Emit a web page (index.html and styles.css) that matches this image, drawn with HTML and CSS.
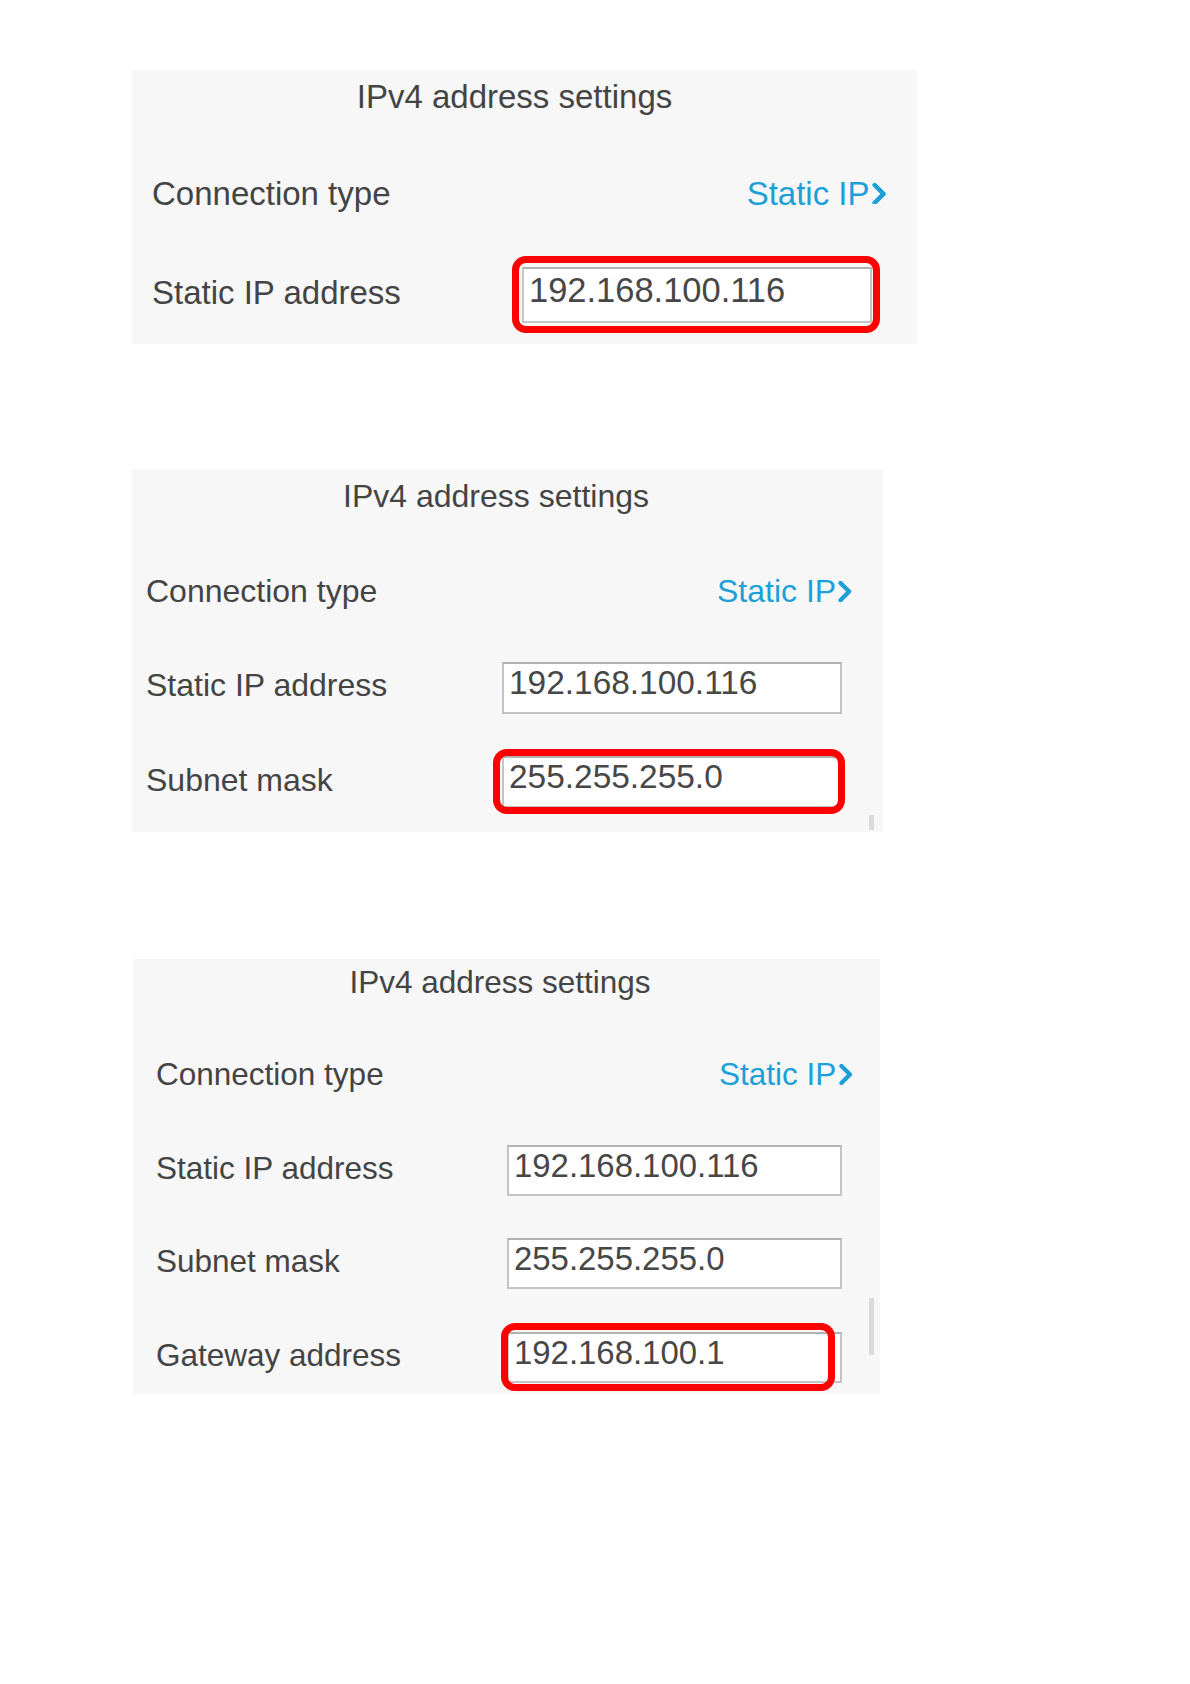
FILE: index.html
```html
<!DOCTYPE html>
<html lang="en">
<head>
    <meta charset="UTF-8">
    <meta name="viewport" content="width=device-width, initial-scale=1.0">
    <title>IPv4 address settings</title>
    <link rel="stylesheet" href="styles.css">
</head>
<body>
    <main class="page">
        <!-- step 1: static ip -->
        <section class="panel panel-one">
            <h2 class="panel-title">IPv4 address settings</h2>
            <div class="row">
                <span class="row-label">Connection type</span>
                <a class="row-link" href="#">Static IP<svg class="chevron" viewBox="0 0 16 22"><polyline points="3,2 12,11 3,20"/></svg></a>
            </div>
            <div class="row">
                <span class="row-label">Static IP address</span>
                <div class="field">192.168.100.116<span class="mark mark-one"></span></div>
            </div>
        </section>

        <!-- step 2: subnet mask -->
        <section class="panel panel-two">
            <h2 class="panel-title">IPv4 address settings</h2>
            <div class="row">
                <span class="row-label">Connection type</span>
                <a class="row-link" href="#">Static IP<svg class="chevron" viewBox="0 0 16 22"><polyline points="3,2 12,11 3,20"/></svg></a>
            </div>
            <div class="row">
                <span class="row-label">Static IP address</span>
                <div class="field">192.168.100.116</div>
            </div>
            <div class="row">
                <span class="row-label">Subnet mask</span>
                <div class="field">255.255.255.0<span class="mark mark-two"></span></div>
            </div>
            <span class="scroll scroll-two"></span>
        </section>

        <!-- step 3: gateway -->
        <section class="panel panel-three">
            <h2 class="panel-title">IPv4 address settings</h2>
            <div class="row">
                <span class="row-label">Connection type</span>
                <a class="row-link" href="#">Static IP<svg class="chevron" viewBox="0 0 16 22"><polyline points="3,2 12,11 3,20"/></svg></a>
            </div>
            <div class="row">
                <span class="row-label">Static IP address</span>
                <div class="field">192.168.100.116</div>
            </div>
            <div class="row">
                <span class="row-label">Subnet mask</span>
                <div class="field">255.255.255.0</div>
            </div>
            <div class="row">
                <span class="row-label">Gateway address</span>
                <div class="field">192.168.100.1<span class="mark mark-three"></span></div>
            </div>
            <span class="scroll scroll-three"></span>
        </section>
    </main>
</body>
</html>
```

FILE: styles.css
```css
body {
    margin: 0;
    background: #fff;
    font-family: "Liberation Sans", Arial, sans-serif;
    color: #444;
}

.page {
    padding: 70px 0 0 132px;
}

.panel {
    position: relative;
    box-sizing: border-box;
    width: var(--w);
    height: var(--h);
    background: #f7f7f7;
    font-size: var(--fs);
}

.panel-one {
    --w: 785px;
    --h: 274px;
    --fs: 33px;
    --title-h: 54px;
    --title-gap: 20px;
    --title-shift: 20px;
    --row: 99px;
    --pad-l: 20px;
    --link-r: 29px;
    --field-r: 45px;
    --field-w: 350px;
    --field-h: 56px;
    --field-pt: 4px;
}

.panel-two {
    margin-top: 125px;
    --w: 751px;
    --h: 363px;
    --fs: 32px;
    --title-h: 54px;
    --title-gap: 21px;
    --title-shift: 23px;
    --row: 94.5px;
    --pad-l: 14px;
    --link-r: 29px;
    --field-r: 41px;
    --field-w: 340px;
    --field-h: 52px;
    --field-pt: 2px;
}

.panel-three {
    margin-top: 127px;
    margin-left: 1px;
    --w: 747px;
    --h: 435px;
    --fs: 31.5px;
    --title-h: 46px;
    --title-gap: 23px;
    --title-shift: 13px;
    --row: 93.5px;
    --pad-l: 23px;
    --link-r: 26px;
    --field-r: 38px;
    --field-w: 335px;
    --field-h: 51px;
    --field-pt: 3px;
}

.panel-title {
    margin: 0 0 var(--title-gap);
    padding-right: var(--title-shift);
    font-size: 1em;
    font-weight: 400;
    line-height: var(--title-h);
    text-align: center;
    color: #444;
}

.row {
    display: flex;
    align-items: center;
    height: var(--row);
    padding-left: var(--pad-l);
}

.row-label {
    color: #444;
}

.row-link {
    display: flex;
    align-items: center;
    margin-left: auto;
    margin-right: var(--link-r);
    color: #1d9fd8;
    text-decoration: none;
}

.chevron {
    width: 0.52em;
    height: 0.66em;
    margin-left: 0.04em;
    fill: none;
    stroke: currentColor;
    stroke-width: 4.5;
    stroke-linecap: round;
    stroke-linejoin: round;
}

.field {
    position: relative;
    box-sizing: border-box;
    width: var(--field-w);
    height: var(--field-h);
    margin: 4px var(--field-r) 0 auto;
    padding: var(--field-pt) 0 0 5px;
    border: 2px solid #c4c4c4;
    border-top-color: #b2b2b2;
    background: #fff;
    font-size: 1.045em;
    line-height: 1;
    color: #474747;
}

/* red highlight drawn over the field */
.mark {
    position: absolute;
    border: 7px solid #f00;
    border-radius: 14px;
}

.mark-one {
    top: -13px;
    left: -12px;
    right: -10px;
    bottom: -12px;
}

.mark-two {
    top: -9px;
    left: -11px;
    right: -5px;
    bottom: -8px;
}

.mark-three {
    top: -11px;
    left: -8px;
    right: 5px;
    bottom: -10px;
}

.scroll {
    position: absolute;
    width: 5px;
    background: #dadada;
}

.scroll-two {
    top: 346px;
    right: 9px;
    height: 15px;
}

.scroll-three {
    top: 339px;
    right: 6px;
    height: 57px;
}
```
